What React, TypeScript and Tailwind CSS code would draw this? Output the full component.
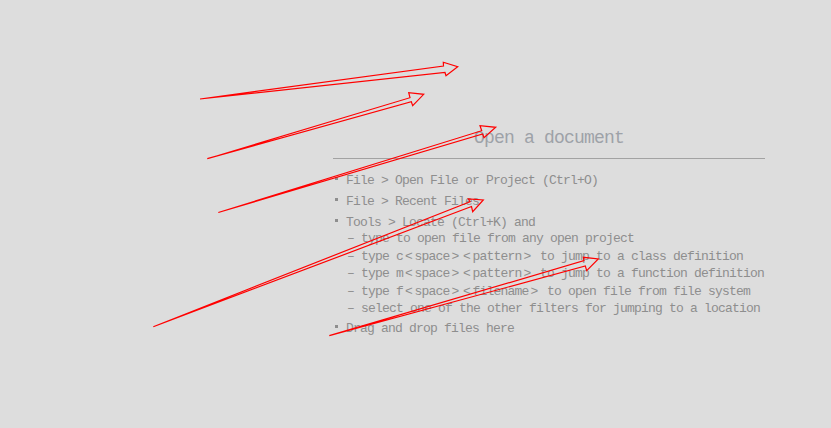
import React from "react";

const arrows: number[][][] = [
  [[200, 99], [443.5, 66], [443.3, 62.3], [457.7, 66.7], [446, 75.7], [445, 72.5]],
  [[207.3, 158.7], [410, 97.7], [408.7, 92.7], [423.7, 94.3], [412.7, 105.7], [411.3, 101.7]],
  [[218.3, 212.5], [481.7, 130.7], [480, 125.7], [495.7, 127.3], [484, 137.7], [482.7, 134]],
  [[153.3, 326.7], [470, 201.7], [468.3, 199], [483.3, 200], [472.7, 211.7], [471.5, 206.5]],
  [[329.3, 335.7], [584, 260.7], [583.3, 257.3], [598.3, 259], [586.7, 270.7], [585.3, 266]],
];

const mono = { fontFamily: '"Liberation Mono", "DejaVu Sans Mono", monospace' };

function Bullet({ children, h }: { children: React.ReactNode; h: string }) {
  return (
    <div className={`flex items-start ${h}`}>
      <span className="ml-[2px] mt-[7px] w-[3px] h-[3px] bg-[#8e8e8e] shrink-0" />
      <span className="ml-[8px] leading-[21px] whitespace-pre">{children}</span>
    </div>
  );
}

function Sub({ children }: { children: React.ReactNode }) {
  return (
    <div className="h-[17.5px] leading-[17.5px] pl-[14px] whitespace-pre">
      {"– "}
      {children}
    </div>
  );
}

function B({ c }: { c: string }) {
  return <span className="inline-block w-[11.5px] text-center tracking-normal">{c}</span>;
}

function Tag({ name }: { name: string }) {
  return (
    <>
      <B c="<" />
      {name}
      <B c=">" />
    </>
  );
}

export default function App() {
  return (
    <div className="relative w-[831px] h-[428px] bg-[#dddddd] overflow-hidden" style={mono}>
      <div className="pl-[333px] pt-[127px] w-[765px]">
        <div className="w-[432px]">
          <div className="text-center text-[18px] leading-[22px] tracking-[-0.8px] text-[#9ea2a8]">
            Open a document
          </div>
          <div className="mt-[9px] h-px bg-[#a2a2a2]" />
          <div className="mt-[11px] text-[13px] tracking-[-0.8px] text-[#8e8e8e]">
            <Bullet h="h-[21px]">File &gt; Open File or Project (Ctrl+O)</Bullet>
            <Bullet h="h-[21px]">File &gt; Recent Files</Bullet>
            <Bullet h="h-[18px]">Tools &gt; Locate (Ctrl+K) and</Bullet>
            <Sub>type to open file from any open project</Sub>
            <Sub>
              type c<Tag name="space" />
              <Tag name="pattern" /> to jump to a class definition
            </Sub>
            <Sub>
              type m<Tag name="space" />
              <Tag name="pattern" /> to jump to a function definition
            </Sub>
            <Sub>
              type f<Tag name="space" />
              <Tag name="filename" /> to open file from file system
            </Sub>
            <Sub>select one of the other filters for jumping to a location</Sub>
            <div className="mt-[0.5px]">
              <Bullet h="h-[21px]">Drag and drop files here</Bullet>
            </div>
          </div>
        </div>
      </div>
      <svg className="absolute inset-0" width="831" height="428" viewBox="0 0 831 428">
        {arrows.map((pts, i) => (
          <polygon
            key={i}
            points={pts.map((p) => p.join(",")).join(" ")}
            fill="none"
            stroke="#ff0000"
            strokeWidth="1.2"
            strokeLinejoin="miter"
          />
        ))}
      </svg>
    </div>
  );
}
